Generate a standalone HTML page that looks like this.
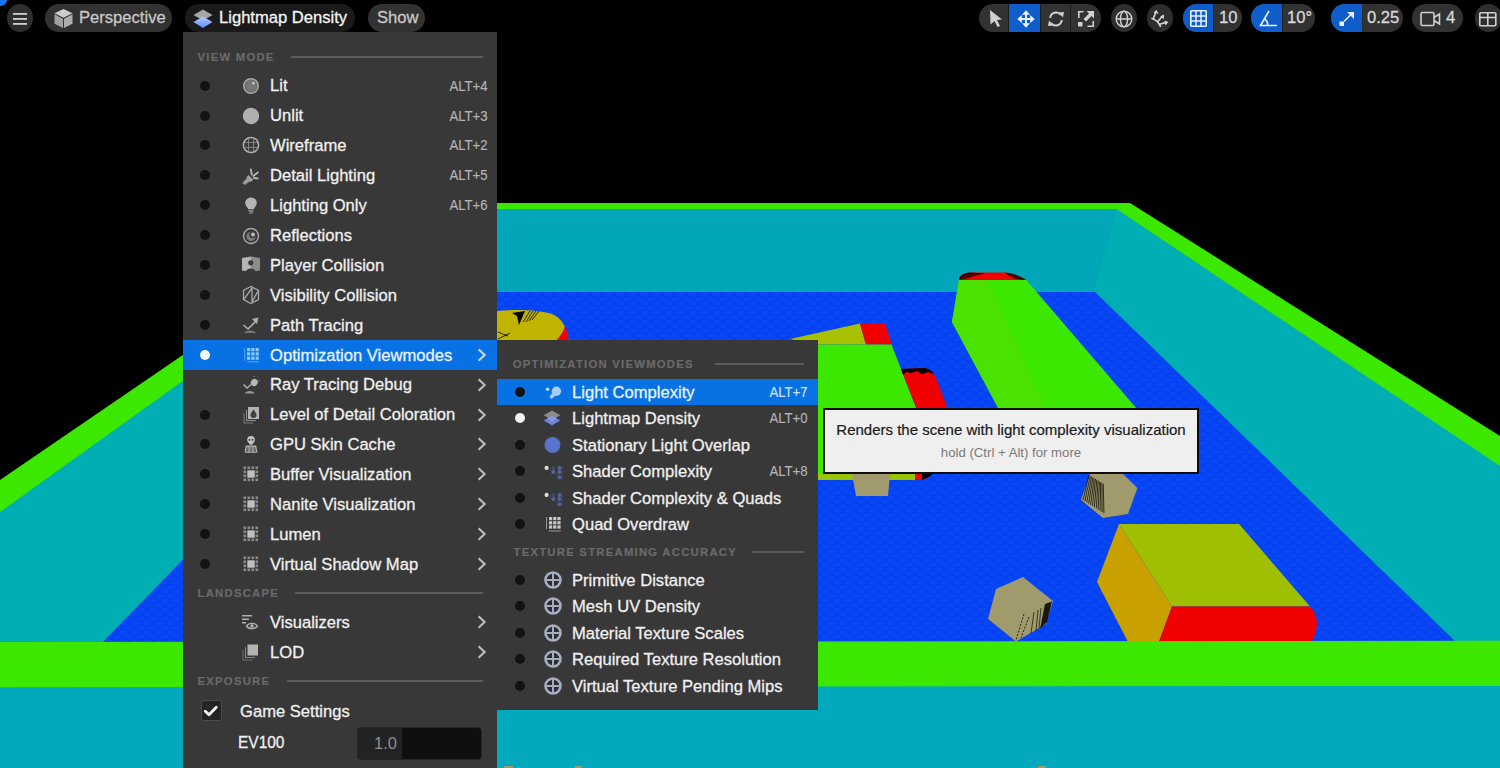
<!DOCTYPE html>
<html><head><meta charset="utf-8">
<style>
html,body{margin:0;padding:0;}
body{width:1500px;height:768px;overflow:hidden;background:#000;position:relative;font-family:"Liberation Sans",sans-serif;}
.abs{position:absolute;}
svg{position:absolute;}
.ic{position:absolute;}
.pill{position:absolute;top:4px;height:27.8px;border-radius:14px;background:#323232;color:#c8c8c8;font-size:17.2px;line-height:28px;white-space:nowrap;overflow:hidden;-webkit-text-stroke:0.3px currentColor;}
.tbt{position:absolute;top:3.3px;line-height:28px;font-size:17.2px;transform:scaleX(0.965);transform-origin:0 50%;color:#d8d8d8;-webkit-text-stroke:0.3px currentColor;}
.menu{position:absolute;background:#383838;}
.hl{position:absolute;background:#0872e4;}
.dot{position:absolute;width:10px;height:10px;border-radius:50%;background:#121212;}
.dot.w{background:#f4f4f4;}
.tx{position:absolute;color:#f0f0f0;font-size:17.2px;line-height:20px;white-space:nowrap;-webkit-text-stroke:0.3px currentColor;transform:scaleX(0.965);transform-origin:0 50%;}
.sc{position:absolute;color:#b4b4b4;font-size:14px;line-height:16px;white-space:nowrap;text-align:right;transform:scaleX(0.94);transform-origin:100% 50%;-webkit-text-stroke:0.15px currentColor;}
.hdr{position:absolute;color:#6a6a6a;font-size:11.3px;font-weight:bold;-webkit-text-stroke:0.2px currentColor;letter-spacing:1.25px;white-space:nowrap;line-height:14px;}
.hline{position:absolute;height:2px;background:#5c5c5c;}
</style></head>
<body>

<svg width="1500" height="768" viewBox="0 0 1500 768" style="left:0;top:0">
<rect x="0" y="0" width="1500" height="768" fill="#000"/>
<polygon points="0,480 405,203 1130,203 1500,436 1500,768 0,768" fill="#3ce800"/>
<polygon points="0,512 423,209 1116.5,209 1500,466 1500,768 0,768" fill="#00aeb4"/>
<polygon points="423,209 1116.5,209 1094,292 443,292" fill="#02a6b9"/>
<defs><pattern id="fl" x="0" y="0" width="12" height="9" patternUnits="userSpaceOnUse"><ellipse cx="3" cy="2.2" rx="3.6" ry="1.8" fill="#1a5cff" opacity="0.25"/><ellipse cx="9" cy="6.7" rx="3.6" ry="1.8" fill="#1a5cff" opacity="0.25"/></pattern></defs>
<polygon points="443,292 1095,292 1456,642 102,643" fill="#0442f2"/>
<polygon points="443,292 1095,292 1456,642 102,643" fill="url(#fl)"/>
<!-- cylinder top-left -->
<path d="M480,313 C505,309 535,309 552,314 C562,318 568,328 569,345 L480,345 Z" fill="#c0b400"/>
<path d="M565,326 C568,332 569,340 569,345 L551,345 C558,340 563,333 565,326 Z" fill="#f00000"/>
<path d="M512,313 L525,311 L522,318 L519,325 L517,316 Z" fill="#000"/>
<g stroke="#000" stroke-width="0.8"><line x1="523" y1="322" x2="530" y2="311"/><line x1="526" y1="322" x2="533" y2="311"/><line x1="529" y1="321" x2="536" y2="311"/><line x1="532" y1="320" x2="539" y2="311"/><line x1="498" y1="332" x2="508" y2="336"/><line x1="498" y1="339" x2="510" y2="333"/></g>
<!-- box 2 -->
<polygon points="790,339 860,323.5 866,344.5 818,344.5" fill="#a8c000"/>
<polygon points="860,323.5 885,323.5 892,344.5 866,344.5" fill="#f00000"/>
<polygon points="818,344.5 891.5,344.5 917,410 917,480 818,480" fill="#3ce800"/>
<path d="M901,369 L925,368 C930,369 933,372 936,378 L946,404 C948,410 948,415 948,420 C948,445 940,465 925,480 L917,480 L917,410 Z" fill="#f00000"/>
<path d="M901,369 L925,368 C929,369 932,371 934,374 L928,372 L922,374 L917,371 L911,373 L906,372 L903,375 Z" fill="#000"/>
<polygon points="818,473 915,473 915,480 818,480" fill="#98c400"/>
<polygon points="915,473 922,473 922,480 915,480" fill="#f00000"/>
<polygon points="922,473 934,473 929,477 922,480" fill="#000"/>
<polygon points="852,474 890,474 888,496 856,496" fill="#a09a6c"/>
<!-- tall green box -->
<path d="M959,280 C959,276 963,273 970,272.5 L1005,272.5 C1012,273 1020,276 1026.3,280 Z" fill="#f00000"/>
<path d="M959,280 C959,276 963,273 970,272.5 L985,273.5 L974,276 L966,279 Z" fill="#300000" opacity="0.85"/>
<path d="M1005,272.5 C1012,273 1020,276 1026.3,280 L1016,279 L1008,275 Z" fill="#200000" opacity="0.85"/>
<polygon points="959,280 1026.3,280 1192,473 1033,473 952,322" fill="#3ce800"/>
<polygon points="959,280 988,280 1075,473 1033,473 952,322" fill="#4ae200"/>
<!-- hexagons -->
<polygon points="1090,474 1123,474 1137.5,488 1128,514 1103,518 1081,500" fill="#a09a6c"/>
<g stroke="#000" stroke-width="0.9" opacity="0.8"><line x1="1089.0" y1="475.0" x2="1083.0" y2="500.0"/><line x1="1090.3" y1="475.8" x2="1084.9" y2="501.2"/><line x1="1091.6" y1="476.6" x2="1086.8" y2="502.4"/><line x1="1092.9" y1="477.4" x2="1088.7" y2="503.6"/><line x1="1094.2" y1="478.2" x2="1090.6" y2="504.8"/><line x1="1095.5" y1="479.0" x2="1092.5" y2="506.0"/><line x1="1096.8" y1="479.8" x2="1094.4" y2="507.2"/><line x1="1098.1" y1="480.6" x2="1096.3" y2="508.4"/><line x1="1099.4" y1="481.4" x2="1098.2" y2="509.6"/><line x1="1100.7" y1="482.2" x2="1100.1" y2="510.8"/><line x1="1102.0" y1="483.0" x2="1102.0" y2="512.0"/><line x1="1103.3" y1="483.8" x2="1103.9" y2="513.2"/></g>
<polygon points="1023,577 1053,601 1046,624 1016,641.5 988,619 996,589" fill="#a09a6c"/>
<path d="M1045,604 L1052,601.5 L1047,622 L1040,629 Z" fill="#000" opacity="0.85"/><g stroke="#000" stroke-width="0.9" opacity="0.7"><line x1="1041" y1="608" x2="1039" y2="628"/><line x1="1038" y1="610" x2="1036" y2="631"/><line x1="1034" y1="612" x2="1031" y2="633"/></g><g stroke="#000" stroke-width="0.9" stroke-dasharray="2 1.5" opacity="0.85"><line x1="1024" y1="614" x2="1016" y2="640"/><line x1="1029" y1="617" x2="1021" y2="638"/></g>
<!-- big box -->
<polygon points="1119,524 1239,524 1310,606.5 1172,606.5" fill="#9fc000"/>
<polygon points="1119,524 1172,606.5 1158.5,643 1128.5,643 1097,582" fill="#c8a000"/>
<path d="M1172,606.5 L1310,606.5 C1318,614 1320,628 1311,643 L1158.5,643 Z" fill="#f00000"/>
<!-- front rim -->
<polygon points="0,642 1500,640.8 1500,686 0,687.5" fill="#3ce800"/>
<polygon points="0,687.5 1500,686 1500,768 0,768" fill="#02a8bb"/>
<rect x="504" y="766" width="9" height="2" fill="#a09a6c"/>
<rect x="575" y="766" width="7" height="2" fill="#a09a6c"/>
<rect x="1038" y="766" width="8" height="2" fill="#a09a6c"/>
</svg>

<div class="abs" style="left:0;top:0;width:6.5px;height:6px;border-bottom-right-radius:6.5px 6px;background:#1674f0;"></div>
<div class="abs" style="left:7px;top:4.3px;width:26px;height:27.6px;border-radius:50%;background:#2e2e2e;"></div>
<svg style="left:13px;top:12px" width="14" height="13" viewBox="0 0 14 13"><g fill="#d0d0d0"><rect x="0" y="1" width="14" height="1.8"/><rect x="0" y="6" width="14" height="1.8"/><rect x="0" y="11" width="14" height="1.8"/></g></svg>
<div class="pill" style="left:45px;width:127px;"><span class="abs" style="left:34px;top:-1.3px;transform:scaleX(0.965);transform-origin:0 50%;">Perspective</span></div>
<svg style="left:53px;top:8px" width="20" height="21" viewBox="0 0 20 21"><path d="M10.5 1 L19.5 5.2 L10.5 9.8 L1.5 5.2 Z" fill="#cdcdcd"/><path d="M1.5 6.3 L10 10.8 L10 20 L1.5 15.8 Z" fill="#a2a2a2"/><path d="M19.5 6.3 L11 10.8 L11 20 L19.5 15.8 Z" fill="#acacac"/></svg>
<div class="pill" style="left:185px;width:170px;background:#1a1a1a;color:#f4f4f4;"><span class="abs" style="left:34px;top:-1.3px;transform:scaleX(0.965);transform-origin:0 50%;">Lightmap Density</span></div>
<svg style="left:192px;top:8px" width="22" height="22" viewBox="0 0 22 22"><defs><linearGradient id="lg1" x1="0" y1="0" x2="0" y2="1"><stop offset="0" stop-color="#b4d0ff"/><stop offset="1" stop-color="#5f86ff"/></linearGradient></defs><path d="M11 1.5 L20.5 7 L11 12.5 L1.5 7 Z" fill="#a6a6a6"/><path d="M11 8.5 L20.5 14 L11 20 L1.5 14 Z" fill="url(#lg1)"/></svg>
<div class="pill" style="left:368px;width:57px;"><span class="abs" style="left:9px;top:-1.3px;transform:scaleX(0.965);transform-origin:0 50%;">Show</span></div>
<div class="pill" style="left:979px;width:122px;"></div>
<div class="abs" style="left:1009px;top:4px;width:31px;height:27.8px;background:#0f5dcb;"></div>
<div class="abs" style="left:1008px;top:4px;width:1px;height:27.8px;background:#1c1c1c;"></div>
<div class="abs" style="left:1040px;top:4px;width:1px;height:27.8px;background:#1c1c1c;"></div>
<div class="abs" style="left:1070px;top:4px;width:1px;height:27.8px;background:#1c1c1c;"></div>
<svg style="left:988px;top:9px" width="16" height="19" viewBox="0 0 16 19"><path d="M2 1 L14 10.5 L9 11 L12 17 L9.5 18 L6.5 12 L2.5 15.5 Z" fill="#d0d0d0"/></svg>
<svg style="left:1017px;top:10px" width="18" height="18" viewBox="0 0 18 18"><g fill="#e8f0ff"><path d="M9 0.3 L13 4.8 L5 4.8 Z"/><path d="M9 17.7 L13 13.2 L5 13.2 Z"/><path d="M0.3 9 L4.8 5 L4.8 13 Z"/><path d="M17.7 9 L13.2 5 L13.2 13 Z"/><rect x="8" y="3" width="2" height="12"/><rect x="3" y="8" width="12" height="2"/></g></svg>
<svg style="left:1047px;top:10px" width="18" height="18" viewBox="0 0 18 18"><g fill="none" stroke="#d0d0d0" stroke-width="2"><path d="M3.2 8 A6 6 0 0 1 14 5"/><path d="M14.8 10 A6 6 0 0 1 4 13"/></g><path d="M11.5 2.5 L17 2 L16 7.5 Z" fill="#d0d0d0"/><path d="M6.5 15.5 L1 16 L2 10.5 Z" fill="#d0d0d0"/></svg>
<svg style="left:1077px;top:10px" width="18" height="18" viewBox="0 0 18 18"><g fill="#d0d0d0"><rect x="1" y="12" width="4.5" height="4.5"/><path d="M9.5 1 L17 1 L17 8.5 L14.5 6 L9 11.5 L6.5 9 L12 3.5 Z"/></g><g fill="none" stroke="#d0d0d0" stroke-width="1.6"><path d="M1.8 8 L1.8 1.8 L6.5 1.8"/><path d="M16.2 11 L16.2 16.2 L10.5 16.2"/></g></svg>
<div class="abs" style="left:1111px;top:4.3px;width:26px;height:27.6px;border-radius:50%;background:#2e2e2e;"></div>
<svg style="left:1115px;top:9.5px" width="18" height="18" viewBox="0 0 18 18"><g fill="none" stroke="#d0d0d0" stroke-width="1.5"><circle cx="9" cy="9" r="7.8"/><ellipse cx="9" cy="9" rx="3.6" ry="7.8"/><line x1="1.2" y1="9" x2="16.8" y2="9"/></g></svg>
<div class="abs" style="left:1147px;top:4.3px;width:26px;height:27.6px;border-radius:50%;background:#2e2e2e;"></div>
<svg style="left:1151px;top:9px" width="18" height="18" viewBox="0 0 18 18"><g fill="none" stroke="#d4d4d4" stroke-width="1.7" stroke-linecap="round"><path d="M1 9.5 Q6.5 11 9.5 17.5"/><line x1="2.3" y1="9.8" x2="4.6" y2="3.8"/><line x1="6.7" y1="12.5" x2="11" y2="7.8"/><line x1="8.8" y1="15.3" x2="14.2" y2="13.6"/></g><g fill="#d4d4d4"><path d="M5.3 0.8 L7.6 4.8 L2.6 3.8 Z"/><path d="M13.2 5.6 L12.8 10 L9.2 7.2 Z"/><path d="M17.4 13 L14.4 16.6 L13.4 11.4 Z"/></g></svg>
<div class="pill" style="left:1183px;width:59px;"></div>
<div class="abs" style="left:1183px;top:4px;width:30px;height:27.8px;background:#0f5dcb;border-radius:14px 0 0 14px;"></div>
<div class="abs" style="left:1213px;top:4px;width:1px;height:27.8px;background:#1c1c1c;"></div>
<svg style="left:1190px;top:10px" width="17" height="17" viewBox="0 0 17 17"><rect x="0.8" y="0.8" width="15.4" height="15.4" rx="0.6" fill="none" stroke="#e8f0ff" stroke-width="1.6"/><g stroke="#e8f0ff" stroke-width="1.5"><line x1="6" y1="0.8" x2="6" y2="16.2"/><line x1="11" y1="0.8" x2="11" y2="16.2"/><line x1="0.8" y1="6" x2="16.2" y2="6"/><line x1="0.8" y1="11" x2="16.2" y2="11"/></g></svg>
<div class="tbt" style="left:1219px;">10</div>
<div class="pill" style="left:1251px;width:64px;"></div>
<div class="abs" style="left:1251px;top:4px;width:31px;height:27.8px;background:#0f5dcb;border-radius:14px 0 0 14px;"></div>
<div class="abs" style="left:1282px;top:4px;width:1px;height:27.8px;background:#1c1c1c;"></div>
<svg style="left:1259px;top:10px" width="19" height="17" viewBox="0 0 19 17"><g fill="none" stroke="#e8f0ff" stroke-width="1.6"><path d="M10 1 L1.5 15.5 L18 15.5"/><path d="M5.5 9 A6.5 6.5 0 0 1 8.5 15.5"/></g></svg>
<div class="tbt" style="left:1287px;">10°</div>
<div class="pill" style="left:1331px;width:72px;"></div>
<div class="abs" style="left:1331px;top:4px;width:31px;height:27.8px;background:#0f5dcb;border-radius:14px 0 0 14px;"></div>
<div class="abs" style="left:1362px;top:4px;width:1px;height:27.8px;background:#2a2a2a;"></div>
<svg style="left:1339px;top:11px" width="16" height="16" viewBox="0 0 16 16"><rect x="0.5" y="10.5" width="4.5" height="4.5" fill="#e8f0ff"/><line x1="5" y1="10.5" x2="13" y2="2.5" stroke="#e8f0ff" stroke-width="1.6"/><path d="M8 1 L15 1 L15 8 Z" fill="#e8f0ff"/></svg>
<div class="tbt" style="left:1367px;">0.25</div>
<div class="pill" style="left:1412px;width:51px;"></div>
<svg style="left:1420px;top:11px" width="21" height="16" viewBox="0 0 21 16"><rect x="1" y="1.5" width="13" height="13" rx="1.5" fill="none" stroke="#d0d0d0" stroke-width="1.6"/><path d="M14 6.5 L19.5 3 L19.5 13 L14 9.5" fill="none" stroke="#d0d0d0" stroke-width="1.6"/></svg>
<div class="tbt" style="left:1446px;">4</div>
<div class="abs" style="left:1475px;top:4.3px;width:27px;height:27.6px;border-radius:50%;background:#2e2e2e;"></div>
<svg style="left:1479px;top:12px" width="18" height="15" viewBox="0 0 18 15"><rect x="0.8" y="0.8" width="16" height="13" rx="1" fill="none" stroke="#d0d0d0" stroke-width="1.6"/><line x1="8.8" y1="0.8" x2="8.8" y2="13.8" stroke="#d0d0d0" stroke-width="1.6"/><line x1="0.8" y1="5.5" x2="16.8" y2="5.5" stroke="#d0d0d0" stroke-width="1.6"/></svg>
<div class="menu" style="left:183px;top:32px;width:314px;height:736px;"></div>
<div class="hdr" style="left:197.5px;top:49.5px;">VIEW MODE</div>
<div class="hline" style="left:291px;top:55.5px;width:192px;"></div>
<div class="dot" style="left:200.3px;top:80.6px;"></div>
<svg class="ic" style="left:240.7px;top:75.6px" width="20" height="20" viewBox="0 0 20 20"><circle cx="10" cy="10" r="7.3" fill="#6e6e6e" stroke="#a8a8a8" stroke-width="1.4"/><circle cx="10.5" cy="9.5" r="5.2" fill="#777"/><circle cx="12.3" cy="7.3" r="1.3" fill="#c8c8c8"/></svg>
<div class="tx" style="left:269.8px;top:75.39999999999999px;">Lit</div>
<div class="sc" style="right:1012.5px;top:77.6px;">ALT+4</div>
<div class="dot" style="left:200.3px;top:110.5px;"></div>
<svg class="ic" style="left:240.7px;top:105.5px" width="20" height="20" viewBox="0 0 20 20"><circle cx="10" cy="10" r="8.2" fill="#b0b0b0"/></svg>
<div class="tx" style="left:269.8px;top:105.3px;">Unlit</div>
<div class="sc" style="right:1012.5px;top:107.5px;">ALT+3</div>
<div class="dot" style="left:200.3px;top:140.39999999999998px;"></div>
<svg class="ic" style="left:240.7px;top:135.39999999999998px" width="20" height="20" viewBox="0 0 20 20"><circle cx="10" cy="10" r="7.6" fill="none" stroke="#b0b0b0" stroke-width="1.5"/><g stroke="#8a8a8a" stroke-width="0.9" fill="none"><line x1="3.5" y1="7.5" x2="16.5" y2="7.5"/><line x1="3.5" y1="12.5" x2="16.5" y2="12.5"/><line x1="7.5" y1="3.5" x2="7.5" y2="16.5"/><line x1="12.5" y1="3.5" x2="12.5" y2="16.5"/></g></svg>
<div class="tx" style="left:269.8px;top:135.2px;">Wireframe</div>
<div class="sc" style="right:1012.5px;top:137.39999999999998px;">ALT+2</div>
<div class="dot" style="left:200.3px;top:170.29999999999998px;"></div>
<svg class="ic" style="left:240.7px;top:165.29999999999998px" width="20" height="20" viewBox="0 0 20 20"><g transform="translate(-1.2 1.5)"><g fill="#999"><path d="M2.5 16.5 L8.5 10 L12 13.5 L5 18.5 Z"/><path d="M8.8 8.5 L13.5 13.2 L11 15.5 L6.5 11 Z" fill="#a0a0a0"/></g><g stroke="#b8b8b8" stroke-width="1.8" stroke-linecap="round"><line x1="12" y1="8" x2="11" y2="3"/><line x1="13.5" y1="9.5" x2="18" y2="6"/><line x1="14" y1="11.5" x2="18" y2="12"/></g></g></svg>
<div class="tx" style="left:269.8px;top:165.1px;">Detail Lighting</div>
<div class="sc" style="right:1012.5px;top:167.29999999999998px;">ALT+5</div>
<div class="dot" style="left:200.3px;top:200.2px;"></div>
<svg class="ic" style="left:240.7px;top:195.2px" width="20" height="20" viewBox="0 0 20 20"><path d="M10 2.5 C13.2 2.5 15.8 5 15.8 8 C15.8 10.5 13.5 12.3 12.8 14.2 L7.2 14.2 C6.5 12.3 4.2 10.5 4.2 8 C4.2 5 6.8 2.5 10 2.5 Z" fill="#b4b4b4"/><rect x="7.5" y="15.2" width="5" height="1.4" fill="#999"/><rect x="8.2" y="17.2" width="3.6" height="1.4" fill="#888"/></svg>
<div class="tx" style="left:269.8px;top:195.0px;">Lighting Only</div>
<div class="sc" style="right:1012.5px;top:197.2px;">ALT+6</div>
<div class="dot" style="left:200.3px;top:230.1px;"></div>
<svg class="ic" style="left:240.7px;top:225.1px" width="20" height="20" viewBox="0 0 20 20"><g transform="translate(0 1)"><circle cx="10" cy="10" r="7.5" fill="none" stroke="#a8a8a8" stroke-width="1.4"/><circle cx="10" cy="10.5" r="4.6" fill="#7a7a7a"/><circle cx="11.5" cy="8.8" r="3.3" fill="#383838"/><circle cx="12" cy="8.5" r="1.9" fill="#c0c0c0"/></g></svg>
<div class="tx" style="left:269.8px;top:224.9px;">Reflections</div>
<div class="dot" style="left:200.3px;top:260.0px;"></div>
<svg class="ic" style="left:240.7px;top:255.0px" width="20" height="20" viewBox="0 0 20 20"><path d="M1 3 L10 1.5 L10 17 L1 15.5 Z" fill="#b4b4b4"/><path d="M10 1.5 L19 3 L19 15.5 L10 17 Z" fill="#8c8c8c"/><circle cx="9.8" cy="7.8" r="2.6" fill="#3a3a3a"/><path d="M4.8 17 C5 12.2 14.6 12.2 14.8 17 Z" fill="#3a3a3a"/></svg>
<div class="tx" style="left:269.8px;top:254.8px;">Player Collision</div>
<div class="dot" style="left:200.3px;top:289.9px;"></div>
<svg class="ic" style="left:240.7px;top:284.9px" width="20" height="20" viewBox="0 0 20 20"><g fill="none" stroke="#a8a8a8" stroke-width="1.3"><path d="M10 1.5 L17.5 5.5 L17.5 14.5 L10 18.5 L2.5 14.5 L2.5 5.5 Z"/><path d="M3 14 L11 3 L11 17 L17 6"/></g></svg>
<div class="tx" style="left:269.8px;top:284.7px;">Visibility Collision</div>
<div class="dot" style="left:200.3px;top:319.79999999999995px;"></div>
<svg class="ic" style="left:240.7px;top:314.79999999999995px" width="20" height="20" viewBox="0 0 20 20"><path d="M2.5 10 L7 14 L15 6" fill="none" stroke="#b0b0b0" stroke-width="1.6"/><path d="M11 4 L17.5 2.5 L16 9 Z" fill="#b0b0b0"/><path d="M3 18 C5 14.5 13 14.5 15 18 Z" fill="#7a7a7a"/></svg>
<div class="tx" style="left:269.8px;top:314.59999999999997px;">Path Tracing</div>
<div class="hl" style="left:183px;top:339.49999999999994px;width:314px;height:30.2px;"></div>
<div class="dot w" style="left:200.3px;top:349.69999999999993px;"></div>
<svg class="ic" style="left:240.7px;top:344.69999999999993px" width="20" height="20" viewBox="0 0 20 20"><rect x="6.0" y="3.0" width="3.2" height="3.2" fill="#8ec6ff"/><rect x="6.0" y="7.3" width="3.2" height="3.2" fill="#8ec6ff"/><rect x="6.0" y="11.6" width="3.2" height="3.2" fill="#8ec6ff"/><rect x="10.3" y="3.0" width="3.2" height="3.2" fill="#8ec6ff"/><rect x="10.3" y="7.3" width="3.2" height="3.2" fill="#8ec6ff"/><rect x="10.3" y="11.6" width="3.2" height="3.2" fill="#8ec6ff"/><rect x="14.6" y="3.0" width="3.2" height="3.2" fill="#8ec6ff"/><rect x="14.6" y="7.3" width="3.2" height="3.2" fill="#8ec6ff"/><rect x="14.6" y="11.6" width="3.2" height="3.2" fill="#8ec6ff"/><rect x="3.2" y="3" width="1" height="12.6" fill="#8ec6ff" opacity="0.6"/><rect x="6" y="16.3" width="12.4" height="1" fill="#8ec6ff" opacity="0.6"/></svg>
<div class="tx" style="left:269.8px;top:344.49999999999994px;color:#e8f4ff;">Optimization Viewmodes</div>
<svg class="ic" style="left:476.3px;top:347.69999999999993px" width="12" height="14" viewBox="0 0 12 14"><path d="M2.6 1.3 L8.6 7 L2.6 12.7" fill="none" stroke="#c8d8f0" stroke-width="2.1"/></svg>
<svg class="ic" style="left:240.7px;top:374.6px" width="20" height="20" viewBox="0 0 20 20"><ellipse cx="13.3" cy="7.5" rx="3.3" ry="3.8" transform="rotate(35 13.3 7.5)" fill="#b8b8b8"/><path d="M2.5 9.5 L6 13 L10 9.5" fill="none" stroke="#aaa" stroke-width="1.6"/><path d="M3.5 18.5 C5.5 15 12 15 14 18.5 Z" fill="#999"/><g stroke="#888" stroke-width="1"><line x1="13" y1="2" x2="13" y2="0.8"/><line x1="17.5" y1="6" x2="19" y2="5.5"/></g></svg>
<div class="tx" style="left:269.8px;top:374.40000000000003px;">Ray Tracing Debug</div>
<svg class="ic" style="left:476.3px;top:377.6px" width="12" height="14" viewBox="0 0 12 14"><path d="M2.6 1.3 L8.6 7 L2.6 12.7" fill="none" stroke="#bdbdbd" stroke-width="2.1"/></svg>
<div class="dot" style="left:200.3px;top:409.5px;"></div>
<svg class="ic" style="left:240.7px;top:404.5px" width="20" height="20" viewBox="0 0 20 20"><rect x="7" y="2" width="11" height="12" fill="#b4b4b4"/><path d="M12.5 4.5 C14.5 7 15.5 8.5 15.5 10 A3 3 0 0 1 9.5 10 C9.5 8.5 10.5 7 12.5 4.5 Z" fill="#404040"/><path d="M5 5 L5 16 L15 16 L15 15 L6 15 L6 5 Z" fill="#909090"/><path d="M2.5 8 L2.5 18.5 L12.5 18.5 L12.5 17.5 L3.5 17.5 L3.5 8 Z" fill="#787878"/></svg>
<div class="tx" style="left:269.8px;top:404.3px;">Level of Detail Coloration</div>
<svg class="ic" style="left:476.3px;top:407.5px" width="12" height="14" viewBox="0 0 12 14"><path d="M2.6 1.3 L8.6 7 L2.6 12.7" fill="none" stroke="#bdbdbd" stroke-width="2.1"/></svg>
<div class="dot" style="left:200.3px;top:439.4px;"></div>
<svg class="ic" style="left:240.7px;top:434.4px" width="20" height="20" viewBox="0 0 20 20"><circle cx="10" cy="5.8" r="3.8" fill="#c4c4c4"/><rect x="8.4" y="8.5" width="3.2" height="2.2" fill="#c4c4c4"/><circle cx="8.5" cy="5.8" r="0.9" fill="#222"/><circle cx="11.5" cy="5.8" r="0.9" fill="#222"/><path d="M3.5 18.5 L4.8 11.5 L15.2 11.5 L16.5 18.5 L15 18.5 L14 13 L6 13 L5 18.5 Z" fill="#b0b0b0"/><rect x="6.5" y="13" width="7" height="5" fill="#8c8c8c"/><rect x="5" y="17.8" width="10" height="1" fill="#bbb"/><rect x="9.6" y="12.5" width="0.8" height="6" fill="#555"/></svg>
<div class="tx" style="left:269.8px;top:434.2px;">GPU Skin Cache</div>
<svg class="ic" style="left:476.3px;top:437.4px" width="12" height="14" viewBox="0 0 12 14"><path d="M2.6 1.3 L8.6 7 L2.6 12.7" fill="none" stroke="#bdbdbd" stroke-width="2.1"/></svg>
<div class="dot" style="left:200.3px;top:469.29999999999995px;"></div>
<svg class="ic" style="left:240.7px;top:464.29999999999995px" width="20" height="20" viewBox="0 0 20 20"><rect x="2.5" y="2.5" width="2.6" height="2.6" fill="#8a8a8a"/><rect x="6.5" y="2.5" width="2.6" height="2.6" fill="#8a8a8a"/><rect x="10.5" y="2.5" width="2.6" height="2.6" fill="#8a8a8a"/><rect x="14.5" y="2.5" width="2.6" height="2.6" fill="#8a8a8a"/><rect x="2.5" y="14.5" width="2.6" height="2.6" fill="#8a8a8a"/><rect x="6.5" y="14.5" width="2.6" height="2.6" fill="#8a8a8a"/><rect x="10.5" y="14.5" width="2.6" height="2.6" fill="#8a8a8a"/><rect x="14.5" y="14.5" width="2.6" height="2.6" fill="#8a8a8a"/><rect x="2.5" y="6.5" width="2.6" height="2.6" fill="#8a8a8a"/><rect x="2.5" y="10.5" width="2.6" height="2.6" fill="#8a8a8a"/><rect x="14.5" y="6.5" width="2.6" height="2.6" fill="#8a8a8a"/><rect x="14.5" y="10.5" width="2.6" height="2.6" fill="#8a8a8a"/><rect x="6.3" y="6.3" width="7.4" height="7.4" fill="#c0c0c0"/></svg>
<div class="tx" style="left:269.8px;top:464.09999999999997px;">Buffer Visualization</div>
<svg class="ic" style="left:476.3px;top:467.29999999999995px" width="12" height="14" viewBox="0 0 12 14"><path d="M2.6 1.3 L8.6 7 L2.6 12.7" fill="none" stroke="#bdbdbd" stroke-width="2.1"/></svg>
<div class="dot" style="left:200.3px;top:499.19999999999993px;"></div>
<svg class="ic" style="left:240.7px;top:494.19999999999993px" width="20" height="20" viewBox="0 0 20 20"><rect x="2.5" y="2.5" width="2.6" height="2.6" fill="#8a8a8a"/><rect x="6.5" y="2.5" width="2.6" height="2.6" fill="#8a8a8a"/><rect x="10.5" y="2.5" width="2.6" height="2.6" fill="#8a8a8a"/><rect x="14.5" y="2.5" width="2.6" height="2.6" fill="#8a8a8a"/><rect x="2.5" y="14.5" width="2.6" height="2.6" fill="#8a8a8a"/><rect x="6.5" y="14.5" width="2.6" height="2.6" fill="#8a8a8a"/><rect x="10.5" y="14.5" width="2.6" height="2.6" fill="#8a8a8a"/><rect x="14.5" y="14.5" width="2.6" height="2.6" fill="#8a8a8a"/><rect x="2.5" y="6.5" width="2.6" height="2.6" fill="#8a8a8a"/><rect x="2.5" y="10.5" width="2.6" height="2.6" fill="#8a8a8a"/><rect x="14.5" y="6.5" width="2.6" height="2.6" fill="#8a8a8a"/><rect x="14.5" y="10.5" width="2.6" height="2.6" fill="#8a8a8a"/><rect x="6.3" y="6.3" width="7.4" height="7.4" fill="#c0c0c0"/></svg>
<div class="tx" style="left:269.8px;top:493.99999999999994px;">Nanite Visualization</div>
<svg class="ic" style="left:476.3px;top:497.19999999999993px" width="12" height="14" viewBox="0 0 12 14"><path d="M2.6 1.3 L8.6 7 L2.6 12.7" fill="none" stroke="#bdbdbd" stroke-width="2.1"/></svg>
<div class="dot" style="left:200.3px;top:529.1px;"></div>
<svg class="ic" style="left:240.7px;top:524.1px" width="20" height="20" viewBox="0 0 20 20"><rect x="2.5" y="2.5" width="2.6" height="2.6" fill="#8a8a8a"/><rect x="6.5" y="2.5" width="2.6" height="2.6" fill="#8a8a8a"/><rect x="10.5" y="2.5" width="2.6" height="2.6" fill="#8a8a8a"/><rect x="14.5" y="2.5" width="2.6" height="2.6" fill="#8a8a8a"/><rect x="2.5" y="14.5" width="2.6" height="2.6" fill="#8a8a8a"/><rect x="6.5" y="14.5" width="2.6" height="2.6" fill="#8a8a8a"/><rect x="10.5" y="14.5" width="2.6" height="2.6" fill="#8a8a8a"/><rect x="14.5" y="14.5" width="2.6" height="2.6" fill="#8a8a8a"/><rect x="2.5" y="6.5" width="2.6" height="2.6" fill="#8a8a8a"/><rect x="2.5" y="10.5" width="2.6" height="2.6" fill="#8a8a8a"/><rect x="14.5" y="6.5" width="2.6" height="2.6" fill="#8a8a8a"/><rect x="14.5" y="10.5" width="2.6" height="2.6" fill="#8a8a8a"/><rect x="6.3" y="6.3" width="7.4" height="7.4" fill="#c0c0c0"/></svg>
<div class="tx" style="left:269.8px;top:523.9px;">Lumen</div>
<svg class="ic" style="left:476.3px;top:527.1px" width="12" height="14" viewBox="0 0 12 14"><path d="M2.6 1.3 L8.6 7 L2.6 12.7" fill="none" stroke="#bdbdbd" stroke-width="2.1"/></svg>
<div class="dot" style="left:200.3px;top:559.0px;"></div>
<svg class="ic" style="left:240.7px;top:554.0px" width="20" height="20" viewBox="0 0 20 20"><rect x="2.5" y="2.5" width="2.6" height="2.6" fill="#8a8a8a"/><rect x="6.5" y="2.5" width="2.6" height="2.6" fill="#8a8a8a"/><rect x="10.5" y="2.5" width="2.6" height="2.6" fill="#8a8a8a"/><rect x="14.5" y="2.5" width="2.6" height="2.6" fill="#8a8a8a"/><rect x="2.5" y="14.5" width="2.6" height="2.6" fill="#8a8a8a"/><rect x="6.5" y="14.5" width="2.6" height="2.6" fill="#8a8a8a"/><rect x="10.5" y="14.5" width="2.6" height="2.6" fill="#8a8a8a"/><rect x="14.5" y="14.5" width="2.6" height="2.6" fill="#8a8a8a"/><rect x="2.5" y="6.5" width="2.6" height="2.6" fill="#8a8a8a"/><rect x="2.5" y="10.5" width="2.6" height="2.6" fill="#8a8a8a"/><rect x="14.5" y="6.5" width="2.6" height="2.6" fill="#8a8a8a"/><rect x="14.5" y="10.5" width="2.6" height="2.6" fill="#8a8a8a"/><rect x="6.3" y="6.3" width="7.4" height="7.4" fill="#c0c0c0"/></svg>
<div class="tx" style="left:269.8px;top:553.8px;">Virtual Shadow Map</div>
<svg class="ic" style="left:476.3px;top:557.0px" width="12" height="14" viewBox="0 0 12 14"><path d="M2.6 1.3 L8.6 7 L2.6 12.7" fill="none" stroke="#bdbdbd" stroke-width="2.1"/></svg>
<div class="hdr" style="left:197.5px;top:586px;">LANDSCAPE</div>
<div class="hline" style="left:295px;top:592px;width:188px;"></div>
<svg class="ic" style="left:240.2px;top:612.2px" width="20" height="20" viewBox="0 0 20 20"><g fill="#b0b0b0"><rect x="2" y="3" width="10" height="1.5"/><rect x="2" y="6.5" width="7" height="1.5"/><rect x="2" y="10" width="4" height="1.5"/></g><path d="M6.5 14 C9 10.5 15 10.5 17.5 14 C15 17.5 9 17.5 6.5 14 Z" fill="none" stroke="#b0b0b0" stroke-width="1.4"/><circle cx="12" cy="14" r="1.8" fill="#b0b0b0"/></svg>
<div class="tx" style="left:269.8px;top:612.0px;">Visualizers</div>
<svg class="ic" style="left:476.3px;top:615.2px" width="12" height="14" viewBox="0 0 12 14"><path d="M2.6 1.3 L8.6 7 L2.6 12.7" fill="none" stroke="#bdbdbd" stroke-width="2.1"/></svg>
<svg class="ic" style="left:240.2px;top:642.2px" width="20" height="20" viewBox="0 0 20 20"><rect x="7.5" y="2.5" width="10.5" height="11" fill="#b4b4b4"/><path d="M5 5 L5 16 L15 16 L15 15 L6 15 L6 5 Z" fill="#8a8a8a"/><path d="M2.5 8 L2.5 18.5 L12.5 18.5 L12.5 17.5 L3.5 17.5 L3.5 8 Z" fill="#6c6c6c"/></svg>
<div class="tx" style="left:269.8px;top:642.0px;">LOD</div>
<svg class="ic" style="left:476.3px;top:645.2px" width="12" height="14" viewBox="0 0 12 14"><path d="M2.6 1.3 L8.6 7 L2.6 12.7" fill="none" stroke="#bdbdbd" stroke-width="2.1"/></svg>
<div class="hdr" style="left:197.5px;top:674.2px;">EXPOSURE</div>
<div class="hline" style="left:287px;top:680.2px;width:196px;"></div>
<div class="abs" style="left:200.5px;top:700px;width:21px;height:21px;box-sizing:border-box;background:#242424;border:1.5px solid #4c4c4c;border-radius:2.5px;"></div>
<svg style="left:203px;top:703px" width="16" height="16" viewBox="0 0 16 16"><path d="M2.3 8.3 L6 11.8 L13.3 4.3" fill="none" stroke="#f4f4f4" stroke-width="2.9" stroke-linecap="round" stroke-linejoin="round"/></svg>
<div class="tx" style="left:240.3px;top:701px;">Game Settings</div>
<div class="tx" style="left:238px;top:732px;transform:scaleX(0.9);">EV100</div>
<div class="abs" style="left:357px;top:727px;width:125px;height:33px;box-sizing:border-box;background:#0f0f0f;border:1px solid #262626;border-radius:4px;overflow:hidden;"><div class="abs" style="left:0;top:0;width:44px;height:33px;background:#232323;"></div><div class="abs" style="left:16px;top:6px;font-size:16.5px;line-height:18px;color:#8e8e8e;">1.0</div></div>
<div class="menu" style="left:497px;top:340px;width:321px;height:370px;"></div>
<div class="hdr" style="left:512.8px;top:356.8px;">OPTIMIZATION VIEWMODES</div>
<div class="hline" style="left:714.5px;top:362.8px;width:89.0px;"></div>
<div class="hl" style="left:497px;top:378.5px;width:321px;height:26.2px;"></div>
<div class="dot" style="left:515.3px;top:386.6px;"></div>
<svg class="ic" style="left:543.3px;top:381.6px" width="20" height="20" viewBox="0 0 20 20"><circle cx="4.6" cy="7.3" r="1.8" fill="#b0dcff"/><circle cx="13.4" cy="9.3" r="4.7" fill="#a4ccff"/><path d="M9.6 10.2 L12.6 13.4 L8.6 17 L6.4 14.8 Z" fill="#a4ccff"/></svg>
<div class="tx" style="left:572.2px;top:381.5px;color:#e8f4ff;">Light Complexity</div>
<div class="sc" style="right:692.5px;top:383.6px;color:#cfe2ff;">ALT+7</div>
<div class="dot w" style="left:515.3px;top:413.15000000000003px;"></div>
<svg class="ic" style="left:543.3px;top:408.15000000000003px" width="20" height="20" viewBox="0 0 20 20"><path d="M9 2.5 L17.3 7.2 L9 12 L0.7 7.2 Z" fill="#8c8c8c"/><path d="M9 7.8 L17.3 12.6 L9 17.6 L0.7 12.6 Z" fill="#6d83d6"/><path d="M9 7.8 L13.8 10.6 L9 13.4 L4.2 10.6 Z" fill="#8ea2e6" opacity="0.7"/></svg>
<div class="tx" style="left:572.2px;top:408.05px;">Lightmap Density</div>
<div class="sc" style="right:692.5px;top:410.15000000000003px;">ALT+0</div>
<div class="dot" style="left:515.3px;top:439.70000000000005px;"></div>
<svg class="ic" style="left:543.3px;top:434.70000000000005px" width="20" height="20" viewBox="0 0 20 20"><circle cx="9.5" cy="10" r="8" fill="#5870c4"/><circle cx="9.5" cy="10" r="6.2" fill="#5a74cc"/></svg>
<div class="tx" style="left:572.2px;top:434.6px;">Stationary Light Overlap</div>
<div class="dot" style="left:515.3px;top:466.25px;"></div>
<svg class="ic" style="left:543.3px;top:461.25px" width="20" height="20" viewBox="0 0 20 20"><circle cx="3.6" cy="6.9" r="2.1" fill="#dcdcdc"/><circle cx="10.3" cy="11" r="2" fill="#56639c" opacity="1"/><circle cx="16.5" cy="6.9" r="2" fill="#56639c" opacity="1"/><circle cx="16.5" cy="11" r="2" fill="#56639c" opacity="1"/><circle cx="16.5" cy="16.2" r="2" fill="#56639c" opacity="1"/><circle cx="10.3" cy="6.9" r="2" fill="#56639c" opacity="0.45"/><g stroke="#4a5070" stroke-width="0.8"><line x1="19" y1="5" x2="19" y2="18.5"/><line x1="5.5" y1="8" x2="9" y2="10.5"/><line x1="11.5" y1="12" x2="15.5" y2="15.5"/></g></svg>
<div class="tx" style="left:572.2px;top:461.15px;">Shader Complexity</div>
<div class="sc" style="right:692.5px;top:463.25px;">ALT+8</div>
<div class="dot" style="left:515.3px;top:492.8px;"></div>
<svg class="ic" style="left:543.3px;top:487.8px" width="20" height="20" viewBox="0 0 20 20"><circle cx="3.6" cy="6.9" r="2.1" fill="#dcdcdc"/><circle cx="10.3" cy="11" r="2" fill="#56639c" opacity="1"/><circle cx="16.5" cy="6.9" r="2" fill="#56639c" opacity="1"/><circle cx="16.5" cy="11" r="2" fill="#56639c" opacity="1"/><circle cx="16.5" cy="16.2" r="2" fill="#56639c" opacity="1"/><circle cx="10.3" cy="6.9" r="2" fill="#56639c" opacity="0.45"/><g stroke="#4a5070" stroke-width="0.8"><line x1="19" y1="5" x2="19" y2="18.5"/><line x1="5.5" y1="8" x2="9" y2="10.5"/><line x1="11.5" y1="12" x2="15.5" y2="15.5"/></g></svg>
<div class="tx" style="left:572.2px;top:487.7px;">Shader Complexity &amp; Quads</div>
<div class="dot" style="left:515.3px;top:519.35px;"></div>
<svg class="ic" style="left:543.3px;top:514.35px" width="20" height="20" viewBox="0 0 20 20"><rect x="6.0" y="3.0" width="3.2" height="3.2" fill="#c8c8c8"/><rect x="6.0" y="7.2" width="3.2" height="3.2" fill="#c8c8c8"/><rect x="6.0" y="11.4" width="3.2" height="3.2" fill="#c8c8c8"/><rect x="10.2" y="3.0" width="3.2" height="3.2" fill="#c8c8c8"/><rect x="10.2" y="7.2" width="3.2" height="3.2" fill="#c8c8c8"/><rect x="10.2" y="11.4" width="3.2" height="3.2" fill="#c8c8c8"/><rect x="14.4" y="3.0" width="3.2" height="3.2" fill="#c8c8c8"/><rect x="14.4" y="7.2" width="3.2" height="3.2" fill="#c8c8c8"/><rect x="14.4" y="11.4" width="3.2" height="3.2" fill="#c8c8c8"/><rect x="3" y="3" width="1" height="12" fill="#999"/><rect x="6" y="16.5" width="12" height="1" fill="#999"/></svg>
<div class="tx" style="left:572.2px;top:514.25px;">Quad Overdraw</div>
<div class="hdr" style="left:513.5px;top:544.6px;">TEXTURE STREAMING ACCURACY</div>
<div class="hline" style="left:752px;top:550.6px;width:52px;"></div>
<div class="dot" style="left:514.7px;top:574.5px;"></div>
<svg class="ic" style="left:542.6px;top:569.5px" width="20" height="20" viewBox="0 0 20 20"><circle cx="10" cy="10" r="7.5" fill="#2a2d36" stroke="#a6adbf" stroke-width="2.6"/><line x1="10" y1="2.5" x2="10" y2="17.5" stroke="#a6adbf" stroke-width="2"/><line x1="2.5" y1="10" x2="17.5" y2="10" stroke="#a6adbf" stroke-width="2"/></svg>
<div class="tx" style="left:572.0px;top:569.6px;">Primitive Distance</div>
<div class="dot" style="left:514.7px;top:601.05px;"></div>
<svg class="ic" style="left:542.6px;top:596.05px" width="20" height="20" viewBox="0 0 20 20"><circle cx="10" cy="10" r="7.5" fill="#2a2d36" stroke="#a6adbf" stroke-width="2.6"/><line x1="10" y1="2.5" x2="10" y2="17.5" stroke="#a6adbf" stroke-width="2"/><line x1="2.5" y1="10" x2="17.5" y2="10" stroke="#a6adbf" stroke-width="2"/></svg>
<div class="tx" style="left:572.0px;top:596.15px;">Mesh UV Density</div>
<div class="dot" style="left:514.7px;top:627.6px;"></div>
<svg class="ic" style="left:542.6px;top:622.6px" width="20" height="20" viewBox="0 0 20 20"><circle cx="10" cy="10" r="7.5" fill="#2a2d36" stroke="#a6adbf" stroke-width="2.6"/><line x1="10" y1="2.5" x2="10" y2="17.5" stroke="#a6adbf" stroke-width="2"/><line x1="2.5" y1="10" x2="17.5" y2="10" stroke="#a6adbf" stroke-width="2"/></svg>
<div class="tx" style="left:572.0px;top:622.7px;">Material Texture Scales</div>
<div class="dot" style="left:514.7px;top:654.15px;"></div>
<svg class="ic" style="left:542.6px;top:649.15px" width="20" height="20" viewBox="0 0 20 20"><circle cx="10" cy="10" r="7.5" fill="#2a2d36" stroke="#a6adbf" stroke-width="2.6"/><line x1="10" y1="2.5" x2="10" y2="17.5" stroke="#a6adbf" stroke-width="2"/><line x1="2.5" y1="10" x2="17.5" y2="10" stroke="#a6adbf" stroke-width="2"/></svg>
<div class="tx" style="left:572.0px;top:649.25px;">Required Texture Resolution</div>
<div class="dot" style="left:514.7px;top:680.7px;"></div>
<svg class="ic" style="left:542.6px;top:675.7px" width="20" height="20" viewBox="0 0 20 20"><circle cx="10" cy="10" r="7.5" fill="#2a2d36" stroke="#a6adbf" stroke-width="2.6"/><line x1="10" y1="2.5" x2="10" y2="17.5" stroke="#a6adbf" stroke-width="2"/><line x1="2.5" y1="10" x2="17.5" y2="10" stroke="#a6adbf" stroke-width="2"/></svg>
<div class="tx" style="left:572.0px;top:675.8000000000001px;">Virtual Texture Pending Mips</div>
<div class="abs" style="left:822.5px;top:408px;width:376px;height:65.5px;box-sizing:border-box;background:#efefef;border:2.2px solid #0d0d0d;"></div>
<div class="abs" style="left:822px;top:421px;width:378px;text-align:center;font-size:15px;line-height:18px;color:#1a1a1a;-webkit-text-stroke:0.2px currentColor;white-space:nowrap;">Renders the scene with light complexity visualization</div>
<div class="abs" style="left:822px;top:444.6px;width:378px;text-align:center;font-size:13.2px;line-height:16px;color:#7a7a7a;white-space:nowrap;">hold (Ctrl + Alt) for more</div>
</body></html>
